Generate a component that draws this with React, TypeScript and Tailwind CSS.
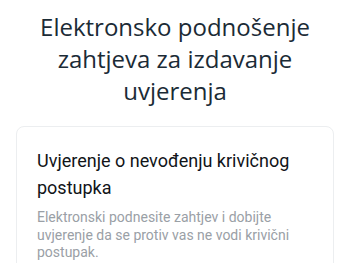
export default function App() {
    return (
        <div className="min-h-screen bg-white px-4 pt-[11px] font-['Open_Sans',sans-serif]">
            <h1 className="text-center text-[24px] leading-[32px] text-[#1b2b36]">
                Elektronsko podnošenje zahtjeva za izdavanje uvjerenja
            </h1>
            <div className="mt-[19px] rounded-lg border border-[#eceef0] bg-white p-5 font-['Roboto',sans-serif]">
                <h2 className="text-[18px] leading-[27px] text-[#111418]">
                    Uvjerenje o nevođenju krivičnog postupka
                </h2>
                <p className="mt-2 text-[14px] leading-[17.5px] text-[#9aa0a6]">
                    Elektronski podnesite zahtjev i dobijte uvjerenje da se protiv vas ne vodi krivični postupak.
                </p>
            </div>
        </div>
    );
}
